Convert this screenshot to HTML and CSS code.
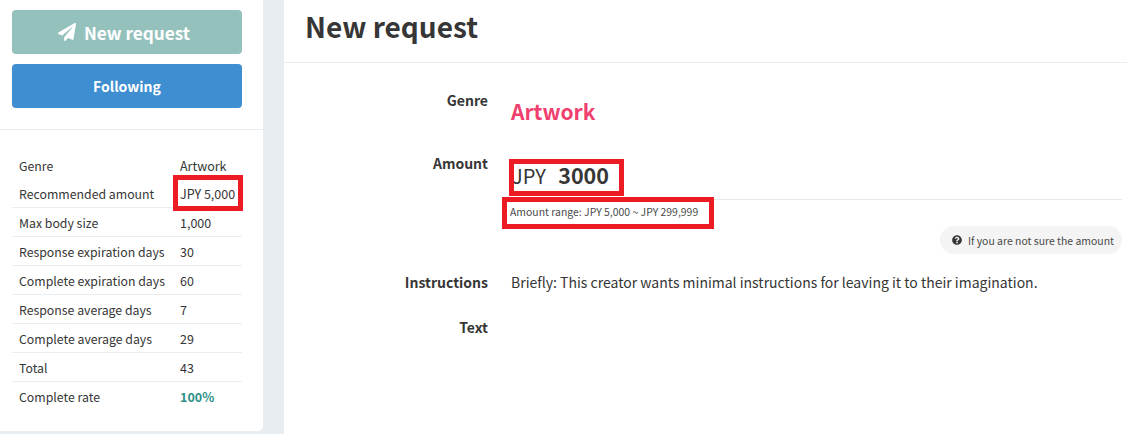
FILE: index.html
```html
<!DOCTYPE html>
<html lang="en">
  <head>
    <meta charset="UTF-8" />
    <meta name="viewport" content="width=device-width, initial-scale=1.0" />
    <link rel="stylesheet" href="styles.css">
  </head>
  <body>
    <div class="sidebar">
      <div class="actions">
        <button class="btn btn-new">
          <svg class="plane" viewBox="0 0 512 512"><path d="M476 3.2 12.5 270.6c-18.1 10.4-15.8 35.6 2.2 43.2L121 358.4l287.3-253.2c5.5-4.9 13.3 2.6 8.6 8.3L176 407v80.5c0 23.6 28.5 32.9 42.5 15.8L282 426l124.6 52.2c14.2 6 30.4-2.9 33-18.2l72-432C515 7.8 493.3-6.8 476 3.2z"/></svg>
          New request
        </button>
        <button class="btn btn-following">Following</button>
      </div>
      <table class="info">
        <tr class="no-line first"><td>Genre</td><td class="val">Artwork</td></tr>
        <tr><td>Recommended amount</td><td class="val">JPY 5,000</td></tr>
        <tr><td>Max body size</td><td class="val">1,000</td></tr>
        <tr><td>Response expiration days</td><td class="val">30</td></tr>
        <tr><td>Complete expiration days</td><td class="val">60</td></tr>
        <tr><td>Response average days</td><td class="val">7</td></tr>
        <tr><td>Complete average days</td><td class="val">29</td></tr>
        <tr><td>Total</td><td class="val">43</td></tr>
        <tr class="no-line"><td>Complete rate</td><td class="val rate">100%</td></tr>
      </table>
    </div>

    <div class="main">
      <h1 class="title">New request</h1>
      <div class="form">
        <div class="row row-genre">
          <div class="label">Genre</div>
          <div class="genre">Artwork</div>
        </div>
        <div class="row row-amount">
          <div class="label">Amount</div>
          <div class="field">
            <div class="amount">JPY <b>3000</b></div>
            <div class="range">Amount range: JPY 5,000 ~ JPY 299,999</div>
            <div class="help-wrap">
              <span class="help">
                <svg class="help-icon" viewBox="0 0 512 512"><path d="M504 256c0 137-111 248-248 248S8 393 8 256 119 8 256 8s248 111 248 248zM262.700 90c-54.500 0-89.300 23-116.600 63.800-3.500 5.300-2.400 12.400 2.700 16.300l34.700 26.300c5.200 3.900 12.600 3 16.700-2.100 17.900-22.700 30.100-35.800 57.300-35.800 20.400 0 45.700 13.100 45.700 32.900 0 15-12.400 22.700-32.600 34-23.600 13.200-54.800 29.700-54.800 70.900V300c0 6.600 5.400 12 12 12h56c6.600 0 12-5.400 12-12v-1.300c0-28.600 83.500-29.800 83.500-107.100C378.300 133.400 317.900 90 262.700 90zM256 339c-25.400 0-46 20.600-46 46s20.600 46 46 46 46-20.600 46-46-20.600-46-46-46z"/></svg>
                If you are not sure the amount
              </span>
            </div>
          </div>
        </div>
        <div class="row row-instr">
          <div class="label">Instructions</div>
          <div class="text">Briefly: This creator wants minimal instructions for leaving it to their imagination.</div>
        </div>
        <div class="row row-text">
          <div class="label">Text</div>
        </div>
      </div>
    </div>

    <!-- red marks drawn on top of the screenshot -->
    <div class="mark mark-rec"></div>
    <div class="mark mark-amount"></div>
    <div class="mark mark-range"></div>
  </body>
</html>
```

FILE: styles.css
```css
html, body {
  height: 100%;
}
body {
  margin: 0;
  height: 434px;
  overflow: hidden;
  position: relative;
  display: flex;
  background-color: #e8edf2;
  color: #363636;
  font-family: "Noto Sans CJK JP", "Noto Sans", sans-serif;
  font-size: 14px;
}
.sidebar {
  width: 263px;
  height: 431px;
  background-color: white;
  border-bottom-right-radius: 5px;
  flex-shrink: 0;
}
.actions {
  display: flex;
  flex-direction: column;
  gap: 10px;
  padding: 10px 21px 21px 12px;
  border-bottom: 1px solid #e8edf2;
}
.btn {
  height: 44px;
  border: none;
  border-radius: 4px;
  color: white;
  font-family: inherit;
  font-weight: 700;
  display: flex;
  align-items: center;
  justify-content: center;
}
.btn-new {
  background-color: #95c1bd;
  font-size: 17.2px;
  gap: 8px;
  padding: 0 6px 0 0;
}
.plane {
  width: 18px;
  height: 18px;
  fill: white;
}
.btn-following {
  background-color: #3f8ed2;
  font-size: 14px;
}
.info {
  width: 230px;
  margin: 21px 0 0 12px;
  border-collapse: collapse;
  table-layout: fixed;
}
.info td {
  height: 29px;
  padding: 3px 0 0 7px;
  box-sizing: border-box;
  border-bottom: 1px solid #e8edf2;
  white-space: nowrap;
  font-size: 12.3px;
  line-height: 20px;
}
.info td.val {
  width: 68px;
  padding-left: 6px;
  font-size: 12.5px;
}
.info .first td {
  height: 27px;
}
.info .no-line td {
  border-bottom: none;
}
.rate {
  color: #2a8f86;
  font-weight: 700;
}
.main {
  flex: 1;
  margin-left: 21px;
  background-color: white;
  height: 434px;
}
.title {
  margin: 0;
  height: 63px;
  box-sizing: border-box;
  padding: 5px 0 0 21px;
  font-size: 28px;
  line-height: 42px;
  font-weight: 700;
  color: #363636;
  border-bottom: 1px solid #e8edf2;
}
.form {
  padding-top: 26px;
  padding-right: 5px;
}
.row {
  display: flex;
}
.label {
  width: 204px;
  flex-shrink: 0;
  text-align: right;
  font-weight: 700;
  font-size: 14px;
  line-height: 22px;
}
.row-genre {
  height: 63px;
}
.row-amount {
  height: 119px;
}
.row-instr {
  height: 45px;
}
.genre {
  margin: 7px 0 0 23px;
  color: #f0406e;
  font-size: 21px;
  line-height: 30px;
  font-weight: 700;
}
.field {
  flex: 1;
  margin-left: 22px;
}
.amount {
  height: 48px;
  box-sizing: border-box;
  padding: 5px 0 0 2px;
  line-height: 36px;
  font-size: 20px;
  font-weight: 400;
  border-bottom: 1px solid #e8e8e8;
}
.amount b {
  margin-left: 8px;
  font-weight: 700;
  font-size: 21.5px;
}
.range {
  font-size: 10.45px;
  line-height: 23px;
  color: #4a4a4a;
}
.help-wrap {
  display: flex;
  justify-content: flex-end;
  margin-top: 3px;
}
.help {
  display: inline-flex;
  align-items: center;
  gap: 6px;
  height: 28px;
  padding: 0 8px 0 12px;
  border-radius: 14px;
  background-color: #f4f4f4;
  font-size: 10.45px;
  color: #4a4a4a;
}
.help-icon {
  width: 10px;
  height: 10px;
  fill: #363636;
}
.text {
  margin-left: 23px;
  font-size: 14px;
  line-height: 22px;
}
.mark {
  position: absolute;
  box-sizing: border-box;
  border: 5px solid #ed1c24;
}
.mark-rec {
  left: 173px;
  top: 175px;
  width: 70px;
  height: 36px;
}
.mark-amount {
  left: 509px;
  top: 159px;
  width: 115px;
  height: 37px;
}
.mark-range {
  left: 502px;
  top: 197px;
  width: 212px;
  height: 32px;
}
```
